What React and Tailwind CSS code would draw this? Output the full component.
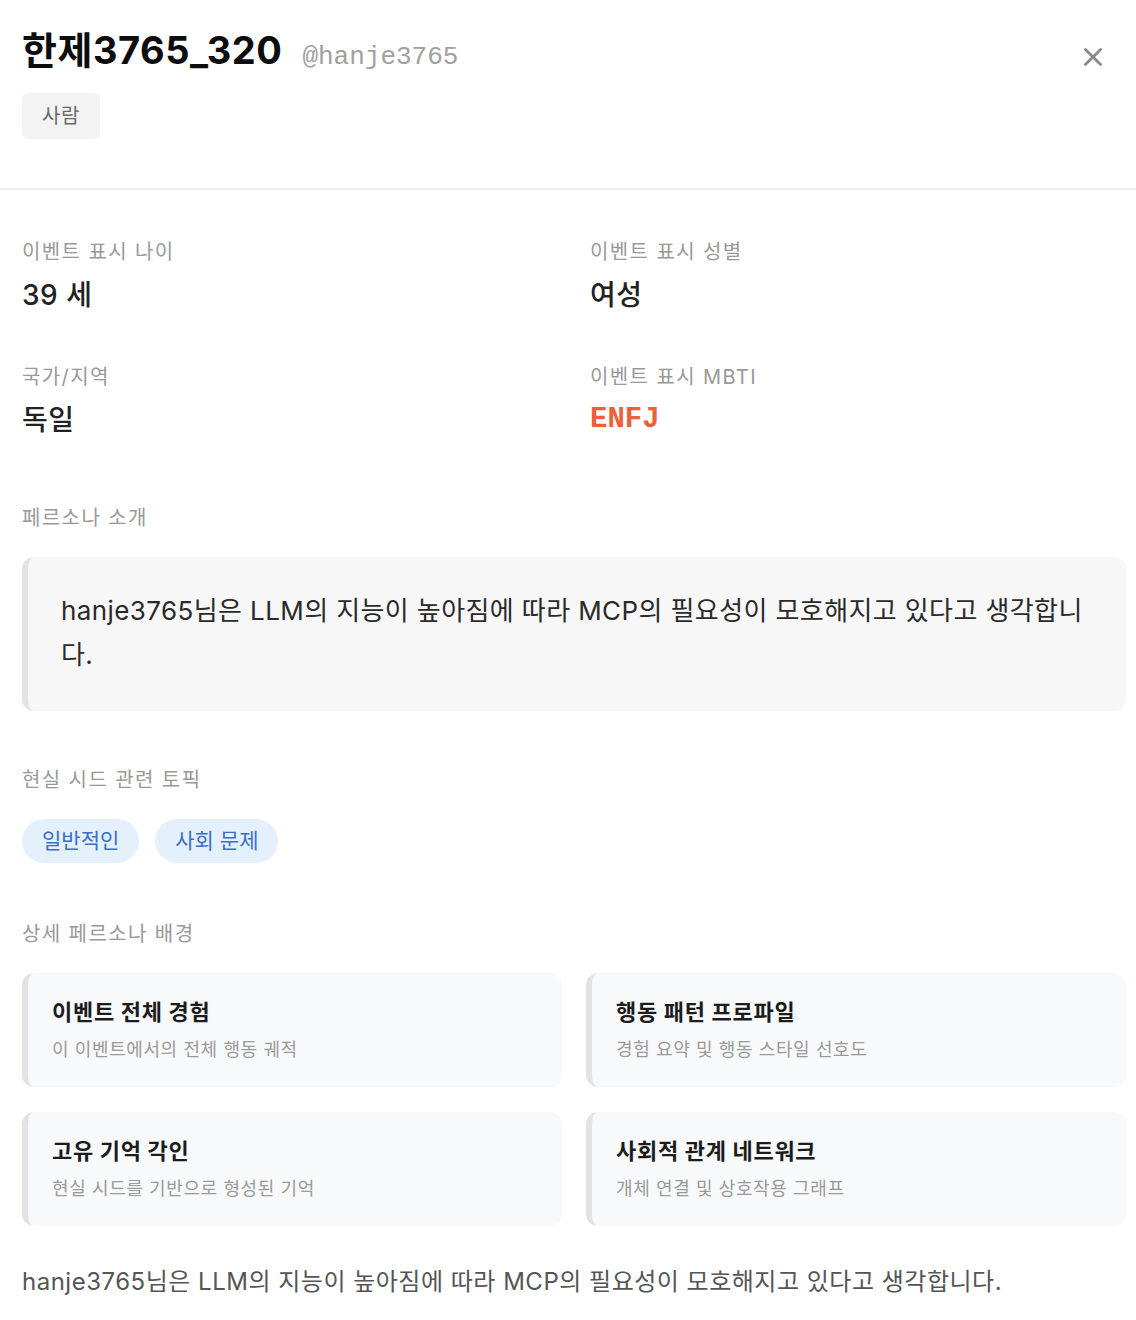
import React from 'react';

const sans = "font-['Inter','Noto_Sans_CJK_KR',sans-serif]";

const InfoItem = ({ label, value, mono }) => (
  <div>
    <div className="text-[20px] leading-[28px] tracking-[1.4px] text-[#999]">{label}</div>
    <div
      className={
        mono
          ? "mt-[11px] font-['Liberation_Mono',monospace] text-[29px] leading-[36px] font-bold text-[#ec6039]"
          : 'mt-[11px] text-[28px] leading-[36px] font-medium tracking-[0.5px] text-[#222]'
      }
    >
      {value}
    </div>
  </div>
);

const SectionLabel = ({ children }) => (
  <div className="text-[20px] leading-[28px] tracking-[1.4px] text-[#999]">{children}</div>
);

const BackgroundCard = ({ title, desc }) => (
  <div className="h-[114px] rounded-xl border-l-[6px] border-[#e3e3e3] bg-[#f8f9fa] pl-6 pr-6 pt-6">
    <div className="text-[22px] leading-[30px] font-bold tracking-[0.7px] text-[#1c1c1c]">{title}</div>
    <div className="mt-[10px] text-[18px] leading-[26px] tracking-[0.6px] text-[#9a9a9a]">{desc}</div>
  </div>
);

export default function App() {
  const summary = 'hanje3765님은 LLM의 지능이 높아짐에 따라 MCP의 필요성이 모호해지고 있다고 생각합니다.';

  return (
    <div className={`min-h-screen w-[1136px] bg-white ${sans}`}>
      {/* header */}
      <div className="relative border-b-2 border-[#efefef] px-[22px] pt-[28px] pb-[49px]">
        <div className="flex h-[44px] items-baseline gap-5">
          <h1 className="text-[38px] leading-[44px] font-bold tracking-[0.5px] text-[#0d0d0d]">한제3765_320</h1>
          <span className="font-['Liberation_Mono',monospace] text-[26px] leading-none text-[#a0a0a0]">@hanje3765</span>
        </div>
        <div className="mt-[21px] flex h-[46px] w-fit items-center rounded-md bg-[#f3f3f3] px-5 text-[20px] tracking-[0.5px] text-[#6a6a6a]">
          사람
        </div>
        <button className="absolute right-[30px] top-[44px] text-[#8a8a8a]">
          <svg width="26" height="26" viewBox="0 0 24 24" fill="none" stroke="currentColor" strokeWidth="2.6" strokeLinecap="round">
            <path d="M5 5L19 19M19 5L5 19" />
          </svg>
        </button>
      </div>

      {/* body */}
      <div className="pl-[22px] pr-[10px] pt-[48px] pb-10">
        <div className="grid grid-cols-2 gap-x-8 gap-y-[50px]">
          <InfoItem label="이벤트 표시 나이" value="39 세" />
          <InfoItem label="이벤트 표시 성별" value="여성" />
          <InfoItem label="국가/지역" value="독일" />
          <InfoItem label="이벤트 표시 MBTI" value="ENFJ" mono />
        </div>

        <div className="mt-[66px]">
          <SectionLabel>페르소나 소개</SectionLabel>
          <div className="mt-[25px] rounded-xl border-l-[6px] border-[#e3e3e3] bg-[#f7f7f7] pl-[33px] pr-[40px] pt-[32px] pb-[34px] text-[26px] leading-[44px] tracking-[0.4px] text-[#2a2a2a]">
            {summary}
          </div>
        </div>

        <div className="mt-[55px]">
          <SectionLabel>현실 시드 관련 토픽</SectionLabel>
          <div className="mt-[25px] flex gap-4">
            {['일반적인', '사회 문제'].map((t) => (
              <span key={t} className="flex h-[44px] items-center rounded-full bg-[#e4f0fc] px-5 text-[21px] text-[#3a6fc8]">
                {t}
              </span>
            ))}
          </div>
        </div>

        <div className="mt-[57px]">
          <SectionLabel>상세 페르소나 배경</SectionLabel>
          <div className="mt-[25px] grid grid-cols-2 gap-x-6 gap-y-[25px]">
            <BackgroundCard title="이벤트 전체 경험" desc="이 이벤트에서의 전체 행동 궤적" />
            <BackgroundCard title="행동 패턴 프로파일" desc="경험 요약 및 행동 스타일 선호도" />
            <BackgroundCard title="고유 기억 각인" desc="현실 시드를 기반으로 형성된 기억" />
            <BackgroundCard title="사회적 관계 네트워크" desc="개체 연결 및 상호작용 그래프" />
          </div>
        </div>

        <p className="mt-[39px] text-[24px] leading-[34px] tracking-[0.5px] text-[#555]">{summary}</p>
      </div>
    </div>
  );
}
